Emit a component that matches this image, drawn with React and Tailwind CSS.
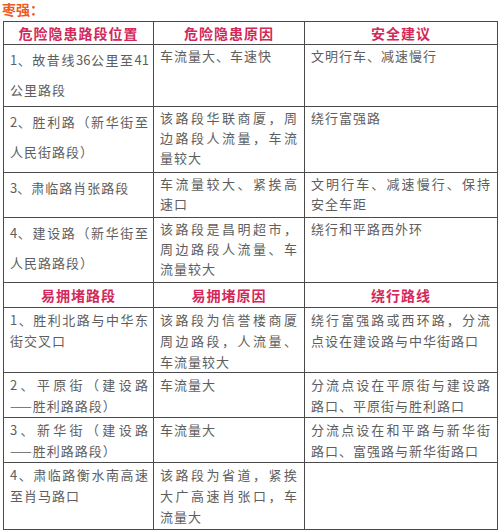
import React from 'react';

const font = { fontFamily: '"Noto Sans CJK SC", "Liberation Sans", sans-serif' };

const hazards = [
  { h: 'h-[62px]', a: '1、故昔线36公里至41公里路段', b: '车流量大、车速快', c: '文明行车、减速慢行' },
  { h: 'h-[66px]', a: '2、胜利路（新华街至人民街路段）', b: '该路段华联商厦，周边路段人流量，车流量较大', c: '绕行富强路' },
  { h: 'h-[45px]', a: '3、肃临路肖张路段', b: '车流量较大、紧挨高速口', c: '文明行车、减速慢行、保持安全车距' },
  { h: 'h-[65px]', a: '4、建设路（新华街至人民路路段）', b: '该路段是昌明超市，周边路段人流量、车流量较大', c: '绕行和平路西外环' },
];

const jams = [
  { h: 'h-[65px]', a: '1、胜利北路与中华东街交叉口', b: '该路段为信誉楼商厦周边路段，人流量、车流量较大', c: '绕行富强路或西环路，分流点设在建设路与中华街路口' },
  { h: 'h-[45px]', a: '2、平原街（建设路——胜利路路段）', b: '车流量大', c: '分流点设在平原街与建设路路口、平原街与胜利路口' },
  { h: 'h-[45px]', a: '3、新华街（建设路——胜利路路段）', b: '车流量大', c: '分流点设在和平路与新华街路口、富强路与新华街路口' },
  { h: 'h-[67px]', a: '4、肃临路衡水南高速至肖马路口', b: '该路段为省道，紧挨大广高速肖张口，车流量大', c: '' },
];

// digits sit tighter than the CJK glyphs
const tight = (text) =>
  text.split(/(\d+)/).map((part, i) =>
    /\d/.test(part) ? <span key={i} className="tracking-normal">{part}</span> : part
  );

const HeadRow = ({ cols, h }) => (
  <tr>
    {cols.map((t) => (
      <th
        key={t}
        className={`${h} border border-[#4a4a4a] p-0 text-center align-middle text-[14px] font-bold tracking-[1px] text-[#d3285a] leading-[19px]`}
      >
        {t}
      </th>
    ))}
  </tr>
);

const cell = 'border border-[#4a4a4a] px-[6px] align-top text-justify text-[13px] tracking-[1px] text-[#5e5e5e]';

export default function App() {
  return (
    <div className="w-[500px] h-[532px] overflow-hidden bg-white" style={font}>
      <div className="h-[21px] pl-[2px] text-[14px] font-bold leading-[19px] text-[#ef5a24]">枣强：</div>
      <table className="ml-[3px] w-[494px] table-fixed border-collapse">
        <colgroup>
          <col className="w-[150px]" />
          <col className="w-[151px]" />
          <col className="w-[193px]" />
        </colgroup>
        <tbody>
          <HeadRow h="h-[23px]" cols={['危险隐患路段位置', '危险隐患原因', '安全建议']} />
          {hazards.map((r) => (
            <tr key={r.a}>
              <td className={`${r.h} ${cell} pr-[4px] pt-0 leading-[30px]`}>{tight(r.a)}</td>
              <td className={`${r.h} ${cell} pt-[1px] leading-[20px]`}>{r.b}</td>
              <td className={`${r.h} ${cell} pt-[1px] leading-[20px]`}>{r.c}</td>
            </tr>
          ))}
          <HeadRow h="h-[25px]" cols={['易拥堵路段', '易拥堵原因', '绕行路线']} />
          {jams.map((r) => (
            <tr key={r.a}>
              <td className={`${r.h} ${cell} pr-[4px] pt-[1px] leading-[21px]`}>{r.a}</td>
              <td className={`${r.h} ${cell} pt-[1px] leading-[21px]`}>{r.b}</td>
              <td className={`${r.h} ${cell} pt-[1px] leading-[21px]`}>{r.c}</td>
            </tr>
          ))}
        </tbody>
      </table>
    </div>
  );
}
